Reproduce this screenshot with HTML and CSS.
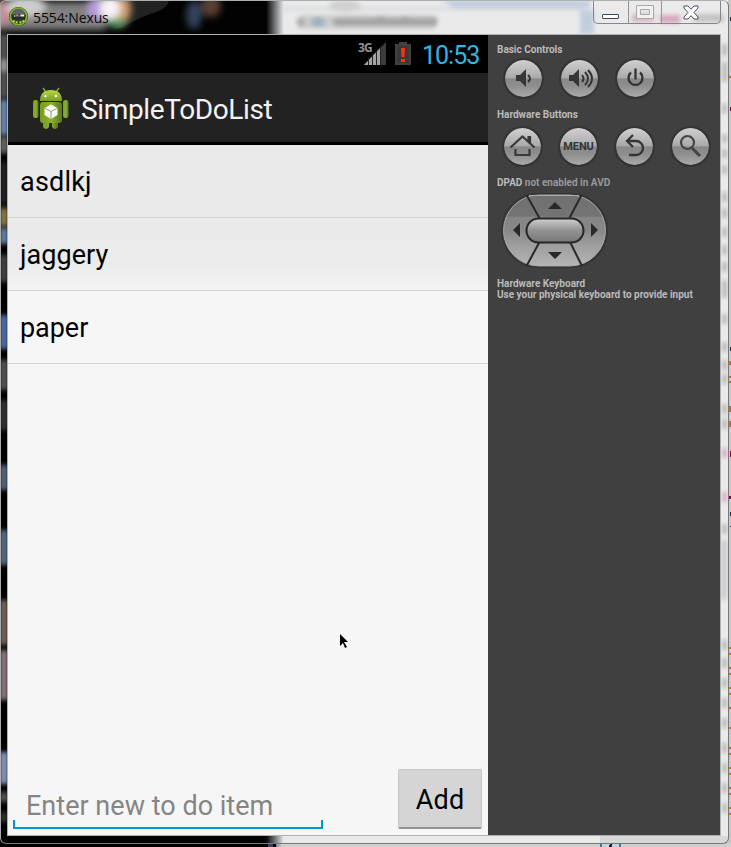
FILE: index.html
```html
<!DOCTYPE html>
<html lang="en">
<head>
<meta charset="utf-8">
<title>5554:Nexus</title>
<link rel="stylesheet" href="styles.css">
</head>
<body>
<div class="desktop">
  <svg class="backdrop" viewBox="0 0 731 847" aria-hidden="true">
    <defs>
      <filter id="soft" x="-50%" y="-50%" width="200%" height="200%"><feGaussianBlur stdDeviation="3.500"/></filter>
      <filter id="small" x="-50%" y="-50%" width="200%" height="200%"><feGaussianBlur stdDeviation="2"/></filter>
      <linearGradient id="edge"><stop offset="0" stop-color="#000"/><stop offset="1" stop-color="#e9ebee"/></linearGradient>
    </defs>
    <rect width="731" height="847" fill="#020202"/>
    <rect x="282" width="449" height="847" fill="#eaeaea"/>
    <rect x="266" width="18" height="847" fill="url(#edge)"/>
    <path d="M126 0h43q-1 8-13 12t-20 8l-15 8h-9q16-7 14-28z" fill="#222"/>
    <g filter="url(#soft)">
      <rect x="-8" y="2" width="114" height="28" fill="#808080"/>
      <ellipse cx="3" cy="12" rx="8" ry="12" fill="#c98d96"/>
      <ellipse cx="26" cy="6" rx="20" ry="11" fill="#ccc"/>
      <ellipse cx="97" cy="8" rx="10" ry="12" fill="#b69ad8"/>
      <ellipse cx="123" cy="9" rx="8" ry="13" fill="#d3a06e"/>
      <ellipse cx="110" cy="8" rx="10" ry="13" fill="#f8f3f5"/>
      <ellipse cx="117" cy="23" rx="10" ry="5" fill="#559b62"/>
      <ellipse cx="194" cy="15" rx="8" ry="14" fill="#30425d"/>
      <ellipse cx="211" cy="6" rx="10" ry="11" fill="#584030"/>
    </g>
    <g filter="url(#small)">
      <path d="M283 9H580Q591 10 591 34" fill="none" stroke="#d5dae0" stroke-width="3"/>
      <path d="M440 0h150v8H455z" fill="#c3cede"/>
      <rect x="296" y="15" width="142" height="14" rx="7" fill="#ccc"/>
      <path d="M334 18h40l8-2 5 2h13l5-2 6 2h18l6-1 3 4-3 5h-99l-4-4z" fill="#a4a4a4"/>
      <circle cx="301" cy="22" r="4" fill="#aaa"/>
      <ellipse cx="318" cy="22" rx="7" ry="5" fill="#9eafc5"/>
      <ellipse cx="345" cy="6" rx="16" ry="6" fill="#d0d0d0"/>
      <rect x="580" y="10" width="14" height="24" fill="#c2cddd"/>
      <rect x="632" y="14" width="22" height="8" fill="#d9b4c5"/>
      <rect x="660" y="15" width="20" height="8" fill="#d8a5bd"/>
      <rect x="694" y="14" width="30" height="8" fill="#c2c2c2"/>
    </g>
    <g filter="url(#small)">
      <path d="M0 34h8v64H0z" fill="#555"/><path d="M0 60h8v11H0z" fill="#999"/>
      <path d="M0 100h8v35H0z" fill="#6b88b5"/><path d="M0 137h8v16H0z" fill="#666"/>
      <path d="M0 162h8v42H0z" fill="#222"/><path d="M0 208h8v18H0z" fill="#8a7b45"/>
      <path d="M0 228h8v16H0z" fill="#667fa8"/><path d="M0 255h8v27H0z" fill="#444"/>
      <path d="M0 315h8v34H0z" fill="#4d70aa"/><path d="M0 360h8v30H0z" fill="#555"/>
      <path d="M0 400h8v30H0z" fill="#333"/><path d="M0 465h8v25H0z" fill="#56667e"/>
      <path d="M0 530h8v35H0z" fill="#596d88"/><path d="M0 600h8v45H0z" fill="#73655a"/>
      <path d="M0 650h8v50H0z" fill="#8b7782"/><path d="M0 752h8v32H0z" fill="#8499bd"/>
      <path d="M0 792h8v10H0z" fill="#555"/><path d="M0 812h8v10H0z" fill="#333"/>
    </g>
    <g filter="url(#small)" fill="#b8b8b8">
      <path d="M722 44h5v12h-5zM722 62h5v20h-5zM722 104h5v9h-5zM722 134h5v9h-5zM722 149h5v9h-5zM722 165h5v9h-5zM722 192h5v10h-5zM722 208h5v10h-5zM722 227h5v10h-5zM722 245h5v10h-5zM722 262h5v10h-5zM722 280h5v18h-5zM722 314h5v10h-5zM722 342h5v10h-5zM722 360h5v10h-5zM722 374h5v10h-5zM722 404h5v10h-5zM722 419h5v10h-5zM722 524h5v10h-5zM722 640h5v10h-5zM722 658h5v10h-5zM722 678h5v10h-5zM722 698h5v10h-5zM722 718h5v10h-5zM722 743h5v10h-5zM722 763h5v10h-5zM722 783h5v10h-5zM722 803h5v10h-5z"/>
      <path d="M722 448h5v10h-5zM722 492h5v10h-5z" fill="#d9a9c3"/>
      <path d="M720 540h8v60h-8z" fill="#cdd0d4"/>
    </g>
    <path d="M600 836H728V843H600z" fill="#d8d8d8"/>
    <path d="M728 0h3v847h-3z" fill="#c9c9c9"/>
    <path d="M281 843h450v4H281z" fill="#cfcfcf"/><path d="M0 844h276v3H0z" fill="#000"/><path d="M268 843h5v4h-5z" fill="#39435a"/><path d="M600 843h21v4h-21z" fill="#3e7890"/><path d="M602 843h17v4h-17z" fill="#c4d2df"/><path d="M609 845h1v-1h2v3h-3z" fill="#124"/>
    <path d="M729 76h2v2h-2zM729 361h2v4h-2zM729 376h2v2h-2zM729 381h2v2h-2zM729 406h2v6h-2zM729 421h2v6h-2zM729 647h2v2h-2zM729 653h2v2h-2zM729 667h2v2h-2zM729 673h2v2h-2zM729 687h2v2h-2zM729 693h2v2h-2zM729 707h2v2h-2zM729 727h2v2h-2zM729 747h2v2h-2zM729 753h2v2h-2zM729 767h2v2h-2zM729 773h2v2h-2zM729 787h2v2h-2zM729 793h2v2h-2zM729 807h2v2h-2zM729 813h2v2h-2z" fill="#b87620"/>
    <path d="M730 451h1v6h-1zM729 496h2v3h-2zM730 107h1v4h-1z" fill="#8a0058"/>
    <path d="M730 17h1v4h-1zM730 347h1v4h-1zM730 512h1v4h-1zM730 526h1v1h-1z" fill="#135"/>
  </svg>

  <div class="window">
    <header class="titlebar">
      <svg class="app-icon" viewBox="0 0 22 22">
        <circle cx="11" cy="11" r="10" fill="#243018"/><circle cx="11" cy="11" r="8.600" fill="#292a29" stroke="#83b52c" stroke-width="2"/>
        <path d="M4 9q1-6 7-6t7 6z" fill="#626262"/><path d="M6 10h2v1H6zM9 9h1v2H9zM11 10h1v1h-1zM13 9h4v2h-4z" fill="#eee"/>
        <path d="M4 14h14l-3 4H7z" fill="#314414"/><path d="M5 15h2v2H5zM8 16h2v2H8zM12 16h2v2h-2zM15 15h2v2h-2z" fill="#b5e250"/>
      </svg>
      <span class="window-title">5554:Nexus</span>
      <div class="window-buttons">
        <span class="wb wb-min"><svg width="18" height="6"><rect x=".5" y=".5" width="16" height="4" rx=".5" fill="#fff" stroke="#3c465c"/></svg></span>
        <span class="wb wb-max"><svg width="18" height="14"><path d="M.5.5h17v13H.5zM4.500 4.500v5h9v-5z" fill="#f1f1f1" fill-rule="evenodd" stroke="#a9a9ad"/></svg></span>
        <span class="wb wb-close"><svg width="16" height="15" viewBox="0 0 16 15"><path d="M1 1h4l3 3.300L11 1h4v2l-4 4.500 4 4.500v2h-4l-3-3.300L5 14H1v-2l4-4.500L1 3z" fill="#fff" stroke="#4a5163" stroke-linejoin="round"/></svg></span>
      </div>
    </header>

    <main class="emulator">
      <section class="phone">
        <div class="status-bar">
          <svg class="signal" width="28" height="27" viewBox="0 0 28 27">
            <path d="M6 24L28 1v23z" fill="#3c3c3c"/><path d="M6 24L22 7v17z" fill="#a4a4a4"/>
            <path d="M10.500 17v7M14.500 13v11M18.500 10v14M22.500 5v19" stroke="#222" stroke-width="1"/>
            <text x="0" y="11" class="net">3G</text>
          </svg>
          <svg class="battery" width="16" height="25" viewBox="0 0 16 25">
            <path d="M0 3h4V1h8v2h4v21H0z" fill="#47403d"/><path d="M2 5h12v17H2z" fill="#383838"/><path d="M6 7h4l-.6 9H6.600zM6 18h4v3H6z" fill="#ff3305"/>
          </svg>
          <span class="clock">10:53</span>
        </div>
        <div class="action-bar">
          <svg class="android" width="36" height="43" viewBox="0 0 36 43">
            <defs><linearGradient id="g" x2="0" y2="1"><stop stop-color="#b5d93e"/><stop offset="1" stop-color="#7a9c23"/></linearGradient><linearGradient id="body"><stop stop-color="#789a27"/><stop offset=".5" stop-color="#8db32c"/><stop offset="1" stop-color="#59751e"/></linearGradient></defs>
            <path d="M10 1l3 4M26 1l-3 4" stroke="#8cae30" stroke-width="1.300"/>
            <path d="M7 14Q7 3 18 3t11 11z" fill="url(#g)"/><circle cx="12.500" cy="9" r="1.200" fill="#fff"/><circle cx="23" cy="9" r="1.200" fill="#fff"/>
            <rect x="0" y="13" width="5.500" height="18" rx="2.500" fill="url(#body)"/><rect x="30" y="13" width="5.500" height="18" rx="2.500" fill="url(#body)"/>
            <path d="M10 33h6v7q-3 4-6 0zM19 33h6v7q-3 4-6 0z" fill="url(#body)"/>
            <rect x="7" y="15" width="22" height="21" rx="3" fill="url(#body)"/>
            <path d="M18 17.500l6.500 3.500v7L18 32l-6.500-4v-7z" fill="#f7f9f3"/><path d="M11.500 21l6.500 3.500 6.500-3.500M18 24.500V32" stroke="#92a07e" fill="none"/>
          </svg>
          <h1 class="app-title">SimpleToDoList</h1>
        </div>
        <ul class="todo-list">
          <li><span class="t-asd">asdlkj</span></li>
          <li><span class="t-jag">jaggery</span></li>
          <li><span class="t-pap">paper</span></li>
        </ul>
        <div class="entry">
          <div class="field"><span>Enter new to do item</span></div>
          <div class="add"><span>Add</span></div>
        </div>
      </section>

      <aside class="controls">
        <h2 class="basic"><span>Basic Controls</span></h2>
        <div class="row row-basic">
          <span class="knob"><svg viewBox="0 0 37 37"><path d="M11 15h4l6-6v18l-6-6h-4z" fill="#363636"/><path d="M23 15q4 3.500 0 7" fill="none" stroke="#303030" stroke-width="2"/></svg></span>
          <span class="knob"><svg viewBox="0 0 37 37"><path d="M8 15h4l6-6v18l-6-6H8z" fill="#363636"/><path d="M21 15q3 3.500 0 7M24 12q6 6.500 0 13M27 10q8 8.500 0 17" fill="none" stroke="#303030" stroke-width="1.900"/></svg></span>
          <span class="knob"><svg viewBox="0 0 37 37"><path d="M14 12.500a7 7 0 1 0 9 0M18.500 8.500v11" fill="none" stroke="#333" stroke-width="2.300"/></svg></span>
        </div>
        <h2 class="hardware"><span>Hardware Buttons</span></h2>
        <div class="row row-hard">
          <span class="knob"><svg viewBox="0 0 37 37"><path d="M6.500 19.500L18.500 8.500l12 11M24.500 13V9h1.500v6M11.500 21v6h14v-6" fill="none" stroke="#383838" stroke-width="2.200"/></svg></span>
          <span class="knob"><span class="menu">MENU</span></span>
          <span class="knob"><svg viewBox="0 0 37 37"><path d="M17 7l-6 6 6 6M11 13h9a7 7 0 0 1 0 14h-7" fill="none" stroke="#343434" stroke-width="2.300"/></svg></span>
          <span class="knob"><svg viewBox="0 0 37 37"><circle cx="15.500" cy="14.500" r="6.500" fill="none" stroke="#444" stroke-width="2.200"/><path d="M20 20l8 8" stroke="#444" stroke-width="3"/></svg></span>
        </div>
        <h2 class="dpad-title"><span>DPAD <em>not enabled in AVD</em></span></h2>
        <svg class="dpad" width="109" height="77" viewBox="0 0 109 77">
          <defs><linearGradient id="pad" x2="0" y2="1"><stop stop-color="#707070"/><stop offset=".3" stop-color="#747474"/><stop offset=".31" stop-color="#858585"/><stop offset=".5" stop-color="#888"/><stop offset=".7" stop-color="#9d9d9d"/><stop offset="1" stop-color="#b5b5b5"/></linearGradient><linearGradient id="center" x2="0" y2="1"><stop stop-color="#d0d0d0"/><stop offset=".5" stop-color="#929292"/><stop offset="1" stop-color="#777"/></linearGradient></defs>
          <rect x="1" y="1" width="107" height="75" rx="37.500" fill="#333"/><rect x="3.500" y="3" width="102" height="71" rx="35.500" fill="url(#pad)" stroke="#aaa"/>
          <path d="M26.500 3l13 23M81.500 3l-12 23M39.500 50l-13 24M70 50l12 24" stroke="#292929" stroke-width="2"/>
          <path d="M29 3.500h50" stroke="#aaa"/>
          <rect x="26.500" y="26.500" width="57" height="24" rx="12" fill="url(#center)" stroke="#262626" stroke-width="2"/>
          <path d="M48 17h14l-7-7zM48 60h14l-7 7zM20 31v14l-7-7z" fill="#292929"/><path d="M91 31v14l7-7z" fill="#292929"/>
        </svg>
        <p class="keyboard"><span class="kb1">Hardware Keyboard</span><span class="kb2">Use your physical keyboard to provide input</span></p>
      </aside>
    </main>
  </div>
  <svg class="cursor" width="9" height="15" viewBox="0 0 9 15"><path d="M0 0l8 8H4l3 5-2 1-2-5-3 3z" fill="#000"/></svg>
</div>
</body>
</html>
```
FILE: styles.css
```css
* { box-sizing: border-box; }
body { margin: 0; overflow: hidden; font-family: Roboto, "Liberation Sans", sans-serif; }
.desktop { position: relative; width: 731px; height: 847px; overflow: hidden; background: #ddd; }
.backdrop { position: absolute; inset: 0; width: 731px; height: 847px; }
.window { position: relative; width: 729px; height: 844px; padding: 0 7px; border: 1px solid #777; border-top-color: #a9b0ad; border-left-color: #aaa; border-radius: 6px; }
.titlebar { display: flex; height: 33px; align-items: flex-start; }
.app-icon { flex: none; width: 21px; height: 21px; margin: 5px 0 0 0; }
.window-title { margin: 8px 0 0 4px; font: 14px/18px "Open Sans", sans-serif; letter-spacing: -.1px; color: #090909; white-space: nowrap; }
.window-buttons { display: flex; height: 23px; width: 128px; margin-left: auto; border: 1px solid #81878e; border-top: 0; border-radius: 0 0 5px 5px; }
.wb { display: flex; justify-content: center; border-right: 1px solid #929498; }
.wb-min { width: 35px; padding-top: 13px; }
.wb-max { width: 33px; padding-top: 4px; }
.wb-close { width: 58px; padding-top: 4px; border: 0; }
.emulator { display: flex; width: 714px; height: 802px; margin-left: -1px; border: 1px solid #b1b1b1; }
.phone { display: flex; flex-direction: column; width: 480px; height: 800px; background: #f6f6f6; }
.status-bar { display: flex; height: 38px; flex: none; background: #000; }
.signal { margin: 6px 0 0 350px; flex: none; overflow: visible; }
.net { font: bold 12px "Open Sans", sans-serif; letter-spacing: -.8px; fill: #919191; }
.battery { margin: 6px 0 0 9px; flex: none; }
.clock { margin: 5px 0 0 11px; font-size: 25px; line-height: 31px; letter-spacing: -1px; color: #33b5e5; }
.action-bar { display: flex; height: 72px; flex: none; background: #222; border-bottom: 3px solid #000; }
.android { margin: 14px 0 0 25px; flex: none; }
.app-title { margin: 19px 0 0 12px; font-size: 28px; line-height: 36px; font-weight: 400; letter-spacing: -.37px; color: #f3f3f3; }
.todo-list { margin: 0; padding: 0; list-style: none; background: linear-gradient(#eaeaea 0, #ebebeb 118px, #f6f6f6 150px); }
.todo-list li { height: 73px; padding: 19px 12px 0; border-bottom: 1px solid #d1d1d1; font-size: 27px; line-height: 36px; color: #000; }
.todo-list .t-asd { letter-spacing: .2px; }
.todo-list .t-jag { letter-spacing: .05px; }
.todo-list .t-pap { letter-spacing: -.05px; }
.entry { display: flex; justify-content: space-between; margin-top: auto; padding: 0 6px 6px 5px; }
.field { position: relative; align-self: flex-end; width: 310px; height: 41px; padding: 0 13px; color: #858585; font-size: 27px; line-height: 36px; white-space: nowrap; }
.field::after { content: ""; position: absolute; left: 0; right: 0; bottom: 0; height: 7px; border: 2px solid #0099cc; border-top: 0; }
.field span { letter-spacing: .02px; }
.add { width: 84px; height: 60px; padding-top: 12px; text-align: center; background: #d5d5d5; border: 1px solid #c6c6c6; border-bottom: 2px solid #929292; border-radius: 2px; font-size: 27px; line-height: 36px; letter-spacing: .2px; }
.controls { width: 232px; padding: 9px 0 0 9px; background: #404040; color: #bbb; }
.controls h2 { margin: 0; height: 12px; font-size: 10px; line-height: 12px; font-weight: 700; white-space: nowrap; }
.controls em { font-style: normal; color: #999; }
.row { display: flex; gap: 15px; }
.row-basic { margin: 2px 0 0 6px; height: 51px; }
.row-hard { margin: 5px 0 0 5px; height: 51px; }
.knob { display: flex; align-items: center; justify-content: center; flex: none; width: 41px; height: 41px; border: 2px solid #343434; border-radius: 50%; background: linear-gradient(#d0d0d0, #aaa 48%, #888 51%, #8e8e8e 70%, #aaa); background-clip: padding-box; }
.knob svg { width: 37px; height: 37px; }
.menu { font-size: 11px; font-weight: 700; letter-spacing: -.1px; color: #333; }
.dpad { display: block; margin: 3px 0 0 3px; }
.keyboard { display: flex; flex-direction: column; margin: 9px 0 0; font-size: 10px; line-height: 11px; font-weight: 700; white-space: nowrap; }
.cursor { position: absolute; left: 340px; top: 634px; }
```
